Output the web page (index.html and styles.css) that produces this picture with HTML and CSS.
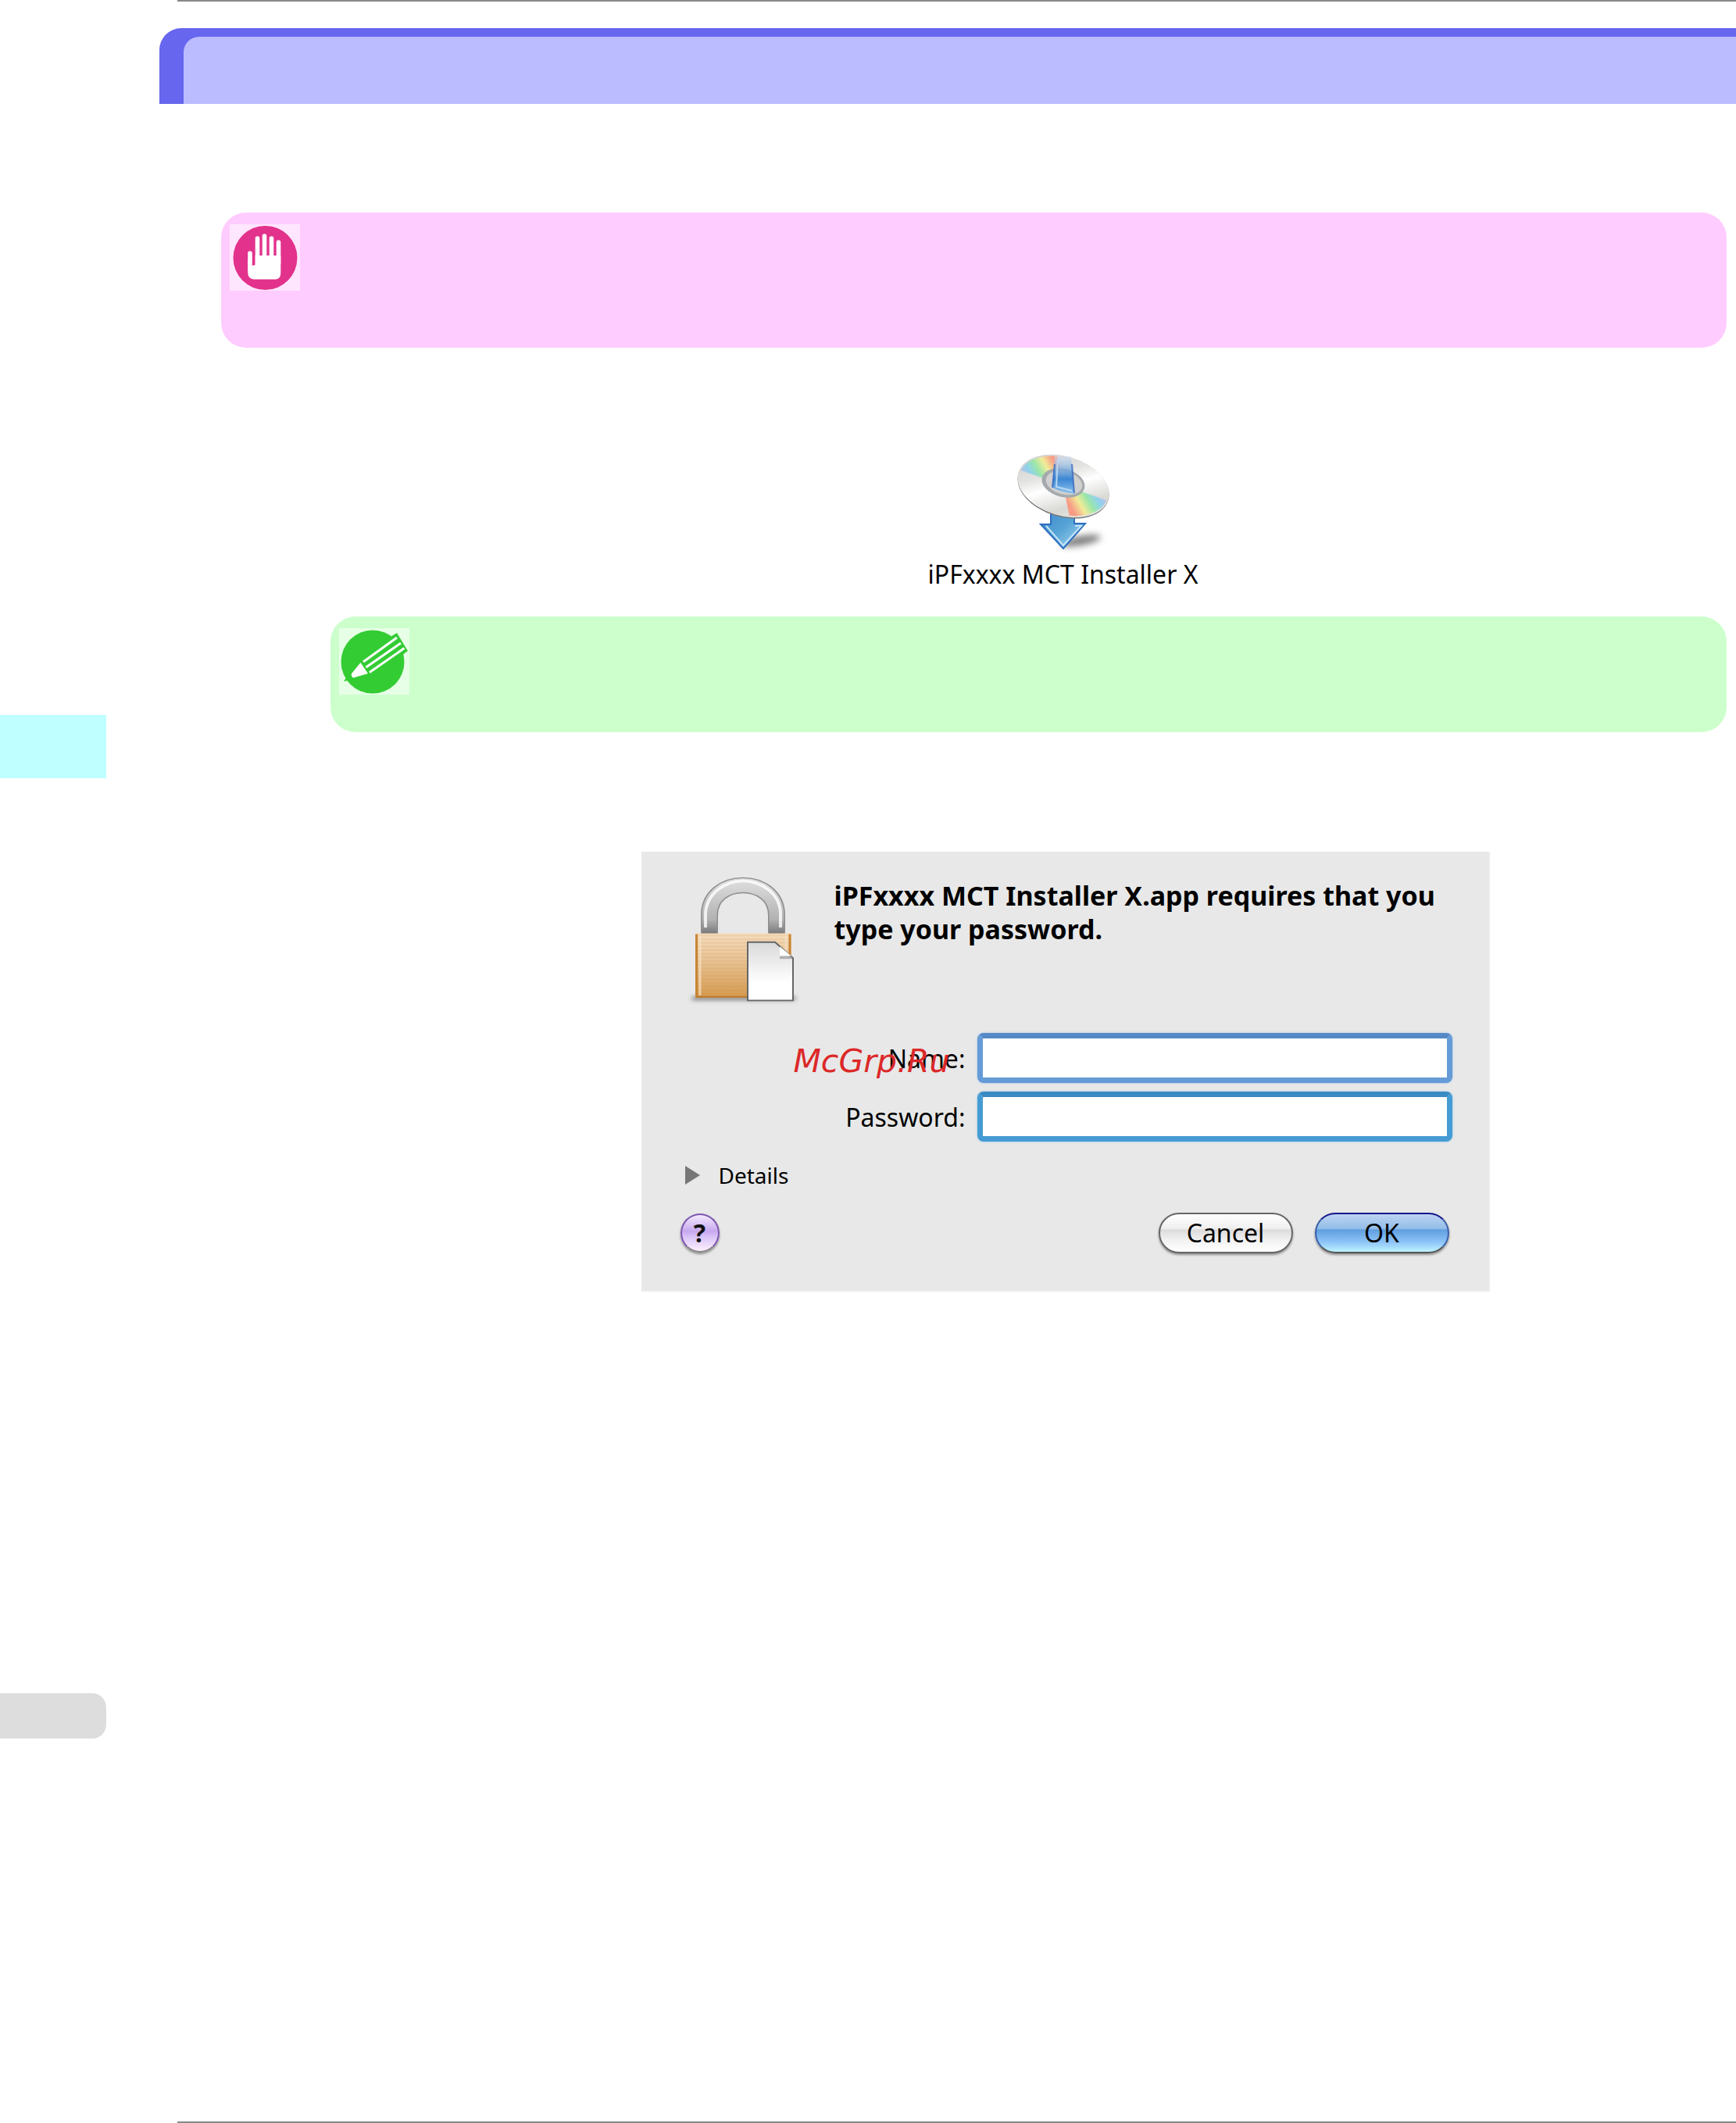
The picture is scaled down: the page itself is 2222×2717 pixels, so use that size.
FILE: index.html
```html
<!DOCTYPE html>
<html lang="en">
<head>
	<meta charset="UTF-8">
	<title>MCT Installer</title>
	<link rel="stylesheet" href="styles.css">
</head>
<body>
	<div class="page">
		<aside class="side">
			<div class="tab tab-chapter"></div>
			<div class="tab tab-page"></div>
		</aside>
		<main class="main">
			<hr class="rule">
			<header class="title"></header>

			<section class="note important">
				<svg class="note-icon" viewBox="0 0 90 85">
					<circle cx="45.500" cy="43" r="41" fill="#e2328c"/>
					<path d="M26 37V58M35.500 18V52M44.500 15V50M53.500 18V50M62.500 23V50" stroke="#fff" stroke-width="5.600" stroke-linecap="round"/>
					<path d="M23.200 45V62Q23.500 70 31 70.500H59Q65.300 70 65.300 62V40H32.700V52L28.800 53Z" fill="#fff"/>
				</svg>
			</section>

			<figure class="figure installer">
				<svg class="installer-icon" viewBox="1290 576 140 132">
					<defs>
						<linearGradient id="disc" x1="0" y1="0" x2="1" y2="1">
							<stop offset="0" stop-color="#c9c9c9"/>
							<stop offset=".35" stop-color="#e2e2e0"/>
							<stop offset=".5" stop-color="#fff"/>
							<stop offset=".72" stop-color="#d8d8d4"/>
							<stop offset="1" stop-color="#f5f5f5"/>
						</linearGradient>
						<linearGradient id="beam" x1="0" y1="0" x2="0" y2="1">
							<stop offset="0" stop-color="#cfdff3" stop-opacity=".5"/>
							<stop offset=".6" stop-color="#3c86d2"/>
							<stop offset="1" stop-color="#8ec4ee"/>
						</linearGradient>
						<linearGradient id="arrow" x1="0" y1="0" x2="1" y2="1">
							<stop offset="0" stop-color="#3e86c8"/>
							<stop offset=".5" stop-color="#56a4d6"/>
							<stop offset="1" stop-color="#b5dff6"/>
						</linearGradient>
						<linearGradient id="rainbow" gradientUnits="userSpaceOnUse" x1="1309" y1="608" x2="1350" y2="584">
							<stop offset="0" stop-color="#b3c0ea"/>
							<stop offset=".2" stop-color="#8fd3ea"/>
							<stop offset=".42" stop-color="#9be6a8"/>
							<stop offset=".65" stop-color="#f1ec98"/>
							<stop offset=".9" stop-color="#f79d85"/>
						</linearGradient>
						<filter id="soft" x="-30%" y="-100%" width="160%" height="300%"><feGaussianBlur stdDeviation="4"/></filter>
						<clipPath id="disc-clip"><ellipse cx="1360" cy="622" rx="58" ry="36" transform="rotate(17 1360 622)"/></clipPath>
					</defs>
					<ellipse cx="1382" cy="692" rx="26" ry="6" fill="#444" opacity=".7" filter="url(#soft)" transform="rotate(-10 1382 692)"/>
					<path d="M1344 650H1374V670H1388L1360 702L1331 671H1344Z" fill="url(#arrow)" stroke="#2f6fc0" stroke-width="2"/>
					<path d="M1375 673H1383L1360 698L1338 673" fill="none" stroke="#c3e5f7" stroke-width="2"/>
					<ellipse cx="1360" cy="623" rx="60" ry="38.500" fill="#777" transform="rotate(17 1360 623)"/>
					<ellipse cx="1360" cy="622" rx="60" ry="38" fill="url(#disc)" transform="rotate(17 1360 622)"/>
					<g clip-path="url(#disc-clip)">
						<path d="M1360 621L1300 600L1325 575H1351Z" fill="url(#rainbow)"/>
						<path d="M1360 621L1300 600L1325 575H1351Z" fill="url(#rainbow)" transform="rotate(180 1360 621)"/>
					</g>
					<ellipse cx="1360" cy="618" rx="28" ry="18" fill="#a3a9ac" transform="rotate(14 1360 618)"/>
					<ellipse cx="1361" cy="618" rx="24" ry="15" fill="#d0d0d0" stroke="#b0b0b0" transform="rotate(14 1361 618)"/>
					<path d="M1349 584H1370L1374 632Q1358 630 1346 624Z" fill="url(#beam)"/>
					<path d="M1349 594L1346 624M1371 594L1374 631" fill="none" stroke="#3467c0" stroke-width="2" opacity=".8"/>
					<path d="M1353 587L1351 623L1371 628" fill="none" stroke="#b9d8f3" stroke-width="2"/>
				</svg>
				<figcaption class="installer-name">iPFxxxx MCT Installer X</figcaption>
			</figure>

			<section class="note hint">
				<svg class="note-icon" viewBox="0 0 90 85">
					<circle cx="43" cy="43" r="40.500" fill="#33cc33"/>
					<path d="M6 68L20 47L64 12L74 6L88 29L44 61Z" fill="#33cc33"/>
					<path d="M31 43L74 12M34.500 50L79 19M39 56.500L83.500 25.500" stroke="#fff" stroke-width="3"/>
					<path d="M27.500 44L37 58L18 63.500Q15 61 16 58Z" fill="#fff"/>
				</svg>
			</section>

			<div class="figure">
				<form class="dialog">
					<div class="dialog-head">
						<svg class="lock" viewBox="871 1121 160 180" preserveAspectRatio="none">
							<defs>
								<linearGradient id="brass" x1="0" y1="0" x2="0" y2="1">
									<stop offset="0" stop-color="#f4dcbd"/>
									<stop offset=".4" stop-color="#e8c497"/>
									<stop offset="1" stop-color="#d59a50"/>
								</linearGradient>
								<linearGradient id="steel" x1="0" y1="0" x2="0" y2="1">
									<stop offset="0" stop-color="#d8d8d8"/>
									<stop offset=".7" stop-color="#b2b2b2"/>
									<stop offset="1" stop-color="#777"/>
								</linearGradient>
								<linearGradient id="paper" x1="0" y1="0" x2="0" y2="1">
									<stop offset="0" stop-color="#d9d9d9"/>
									<stop offset=".7" stop-color="#fff"/>
								</linearGradient>
								<pattern id="lines" width="8" height="5" patternUnits="userSpaceOnUse">
									<path d="M0 1H8" stroke="#c88738" stroke-opacity=".28"/>
								</pattern>
								<filter id="shade" filterUnits="userSpaceOnUse" x="871" y="1275" width="160" height="30"><feGaussianBlur stdDeviation="3"/></filter>
							</defs>
							<path d="M886 1292H1018" stroke="#555" stroke-width="6" opacity=".6" filter="url(#shade)"/>
							<path d="M908 1204V1178C908 1151 929 1137 951 1137S994 1151 994 1178V1204" fill="none" stroke="#8d8d8d" stroke-width="22"/>
							<path d="M908 1204V1178C908 1151 929 1137 951 1137S994 1151 994 1178V1204" fill="none" stroke="url(#steel)" stroke-width="19"/>
							<path d="M903 1195V1175C905 1148 928 1131 951 1131S998 1148 999 1175V1195" fill="none" stroke="#fff" stroke-width="4" opacity=".8"/>
							<path d="M890 1203H1013V1291H890Z" fill="url(#brass)"/>
							<path d="M890 1203H1013V1291H890Z" fill="url(#lines)"/>
							<path d="M891.500 1204V1290M1011 1204V1290" stroke="#c78535" stroke-width="3"/>
							<path d="M896 1206V1288M1006 1206V1288" stroke="#f7e2c6" stroke-width="3" opacity=".7"/>
							<path d="M891 1290H1012" stroke="#b9772c" stroke-width="2"/>
							<path d="M957 1215H992L1015 1237V1295H957Z" fill="url(#paper)" stroke="#666" stroke-width="2"/>
							<path d="M998 1221V1234H1013Z" fill="#fff"/>
							<path d="M998 1236H1014" stroke="#8a8a8a" stroke-width="4" opacity=".6"/>
						</svg>
						<p class="message">iPFxxxx MCT Installer X.app requires that you type your password.</p>
					</div>

					<div class="fields">
						<label class="label" for="name">Name:</label>
						<input class="field" type="text" id="name">
						<label class="label" for="password">Password:</label>
						<input class="field field-password" type="password" id="password">
					</div>

					<details class="details">
						<summary class="summary">
							<svg class="arrow" viewBox="0 0 20 24"><path d="M1 0L20 12L1 24Z" fill="#777"/></svg>
							Details
						</summary>
					</details>

					<div class="actions">
						<button class="help" type="button">?</button>
						<button class="btn btn-cancel" type="button">Cancel</button>
						<button class="btn btn-ok" type="submit">OK</button>
					</div>
					<span class="watermark">McGrp.Ru</span>
				</form>
			</div>

			<hr class="rule rule-bottom">
		</main>
	</div>
</body>
</html>
```

FILE: styles.css
```css
* {
	box-sizing: border-box;
}
body {
	margin: 0;
	background: #fff;
	color: #000;
	font-family: "Lucida Grande", "Noto Sans", sans-serif;
	font-size: 32px;
}
p, figure {
	margin: 0;
}
svg {
	display: block;
}
.page {
	display: flex;
	min-height: 100vh;
}

/* left tabs */
.side {
	flex: none;
	width: 136px;
	padding-top: 915px;
}
.tab-chapter {
	height: 81px;
	background: #bfffff;
}
.tab-page {
	height: 58px;
	margin-top: 1171px;
	border-radius: 0 18px 18px 0;
	background: #ddd;
}

.main {
	display: flex;
	flex: 1;
	flex-direction: column;
	min-width: 0;
	padding-left: 68px;
}
.rule {
	width: auto;
	height: 2px;
	margin: 0 0 0 23px;
	border: 0;
	background: #888;
}
.rule-bottom {
	margin-top: auto;
}
.title {
	height: 97px;
	margin-top: 34px;
	border-top: 11px solid #66e;
	border-left: 31px solid #66e;
	border-radius: 28px 0 0 0;
	background: #66e;
}
.title::before {
	content: "";
	display: block;
	height: 100%;
	border-radius: 20px 0 0 0;
	background: #bbf;
}

/* notes */
.note {
	margin-right: 12px;
	padding: 15px 11px;
	border-radius: 32px;
}
.note-icon {
	width: 90px;
	height: 85px;
	background: rgba(255, 255, 255, .5);
}
.important {
	min-height: 173px;
	margin-top: 139px;
	margin-left: 79px;
	background: #fcf;
}
.hint {
	min-height: 148px;
	margin-left: 219px;
	background: #cfc;
}

.figure {
	display: flex;
	flex-direction: column;
	align-items: center;
	margin: 0 12px 0 313px;
}
.installer {
	padding: 131px 6px 28px 0;
}
.installer-icon {
	width: 140px;
	height: 132px;
}
.installer-name {
	line-height: 53px;
}

/* password dialog */
.dialog {
	position: relative;
	width: 1086px;
	max-width: 100%;
	margin-top: 153px;
	padding: 28px 46px 47px 50px;
	border: solid #ececec;
	border-width: 0 2px 2px 0;
	background: #e8e8e8;
}
.dialog-head {
	display: flex;
	gap: 37px;
}
.lock {
	flex: none;
	width: 160px;
	height: 168px;
}
.message {
	padding-top: 7px;
	font-size: 34px;
	font-weight: bold;
	line-height: 43px;
}
.fields {
	display: grid;
	grid-template-columns: 365px 1fr;
	gap: 11px 15px;
	align-items: center;
	margin-top: 36px;
}
.label {
	text-align: right;
}
.field {
	width: 100%;
	height: 64px;
	padding: 0 12px;
	border: 7px solid #659bd6;
	border-top-color: #5489c6;
	border-radius: 8px;
	outline: 0;
	background: #fff;
	box-shadow: 0 0 3px #9fc0e6;
	font: inherit;
}
.field-password {
	border-color: #459bd3;
	border-top-color: #3a8bc1;
	box-shadow: 0 0 3px #8fc4e4;
}
.details {
	margin-top: 24px;
	font-size: 28px;
	line-height: 38px;
}
.summary {
	display: flex;
	align-items: center;
	gap: 24px;
	padding-left: 5px;
	list-style: none;
}
.arrow {
	width: 20px;
	height: 24px;
}
.actions {
	display: flex;
	align-items: center;
	gap: 28px;
	margin-top: 29px;
	padding-right: 4px;
}
.help {
	width: 50px;
	height: 50px;
	margin-right: auto;
	padding: 0;
	border: 2px solid #7c55b0;
	border-bottom-color: #888;
	border-radius: 50%;
	background: linear-gradient(#f3eafd, #c6a8ee 45%, #d8c2f7 60%, #fff0ff);
	box-shadow: 0 2px 3px rgba(0, 0, 0, .4);
	color: #111;
	font: bold 32px/44px "Lucida Grande", "Noto Sans", sans-serif;
}
.btn {
	width: 172px;
	height: 52px;
	padding: 0;
	border: 2px solid #666;
	border-radius: 26px;
	box-shadow: 0 2px 3px rgba(0, 0, 0, .4);
	color: #000;
	font: 32px/44px "Lucida Grande", "Noto Sans", sans-serif;
}
.btn-cancel {
	background: linear-gradient(#fff, #efefef 38%, #dcdcdc 42%, #f2f2f2 70%, #fff);
}
.btn-ok {
	border-color: #14148a #3a5fa8 #555;
	background: linear-gradient(#bcd3f2, #94bee9 38%, #5f9fe0 42%, #8fc5f8 75%, #bdf4ff);
}
.watermark {
	position: absolute;
	top: 245px;
	left: 195px;
	color: #dc2828;
	font: oblique 41px/46px "DejaVu Sans", sans-serif;
}
```
